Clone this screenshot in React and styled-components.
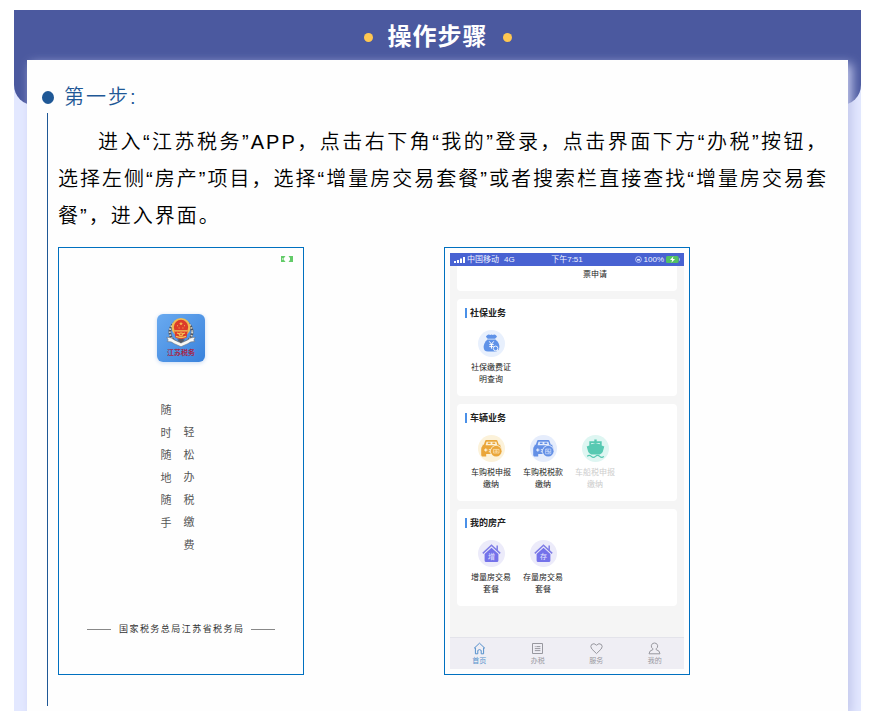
import styled, { createGlobalStyle } from "styled-components"

const carIcon = (color, light, mark) => (
    <svg viewBox="0 0 27 27">
        <path d="M7 6.2Q7.3 5 8.4 5h9.8q1.1 0 1.4 1.2l1.2 3.6h1.5v2H4.6v-2h1.2z" fill={color} />
        <path d="M8.6 6.8h9.8l.9 3.4H7.6z" fill={light} />
        <path d="M9.8 7.6h2.8v1.5H9.8zM14.4 7.6h2.8v1.5h-2.8z" fill={color} />
        <path d="M4.6 11h17.4q1.4 1 1.4 3v5H8.2v2.6H4l-.8-1.4V14q0-2 1.4-3z" fill={color} />
        <path d="M6 14.4h1.1v-1h1.3v1h1.1v1.2H8.4v1H7.1v-1H6zM10.8 14.2h2v1h-2zM10.8 16.2h2v1h-2z" fill={light} />
        <circle cx="18.2" cy="16.2" r="6.1" fill={light} />
        <circle cx="18.2" cy="16.2" r="5.4" fill={color} />
        {mark}
    </svg>
)

const houseIcon = (mark) => (
    <svg viewBox="0 0 27 27">
        <path d="M4.8 13.4L13.5 5.2L22.2 13.4M19.2 10.4V5.6" fill="none" stroke="#7f7de6" strokeWidth="1.5" />
        <path d="M6.6 14l6.9-6.2 6.9 6.2v6.4q0 1.5-1.5 1.5H8.1q-1.5 0-1.5-1.5z" fill="#7472ea" />
        <text x="13.5" y="18.8" textAnchor="middle" fontSize="7" fill="#e6e5ff">{mark}</text>
    </svg>
)

const moneyBag = (
    <svg viewBox="0 0 27 27">
        <path d="M8.8 5.4q2-1.4 3.4-.4 1.3-1 2.6 0 1.8-1 3.4.4l.8 1.3-2 2.1H9.7L7.9 6.7z" fill="#5f92e8" />
        <path d="M9.4 9.4h8q4.2 3.4 4 7.6-.3 4.6-4.6 4.6h-6.8q-4.3 0-4.4-4.6 0-4 3.8-7.6z" fill="#5f92e8" />
        <path d="M11.3 11.4l2.2 2.8 2.2-2.8M13.5 14v4.6M11.3 14.6h4.4M11.3 16.6h4.4" fill="none" stroke="#fff" strokeWidth="1" />
        <circle cx="17.6" cy="18.4" r="2.3" fill="#5f92e8" stroke="#eaf1fd" strokeWidth="1" />
        <path d="M19.2 20.1l2 2" stroke="#eaf1fd" strokeWidth="1.2" />
    </svg>
)

const shipIcon = (
    <svg viewBox="0 0 27 27">
        <path d="M12.3 4.4h2.4v1.8h5v4.4l2.6 1-1.6 5.4q-1.2 1.8-3 2.4H9.3q-1.8-.6-3-2.4l-1.6-5.4 2.6-1V6.2h5z" fill="#57c9b2" />
        <path d="M9.2 8h8.6v1.3l-4.3-1.2-4.3 1.2z" fill="#def6f2" />
        <path d="M5.2 21.4q2-2 4.1 0t4.2 0 4.2 0 4.1 0" fill="none" stroke="#57c9b2" strokeWidth="1.3" />
    </svg>
)

const groups = [
    {
        title: "社保业务",
        items: [{ name: "社保缴费证明查询", tint: "#e8f0fd", icon: moneyBag }]
    },
    {
        title: "车辆业务",
        items: [
            {
                name: "车购税申报缴纳",
                tint: "#fcf2da",
                icon: carIcon("#eaa63a", "#fcf2da", <path d="M15.4 14.4h5.6v3.6h-5.6zM16.4 16.2h3.6M18.2 14.4v3.6" fill="none" stroke="#fbe0ae" strokeWidth=".8" />)
            },
            {
                name: "车购税税款缴纳",
                tint: "#e6edfc",
                icon: carIcon("#6490e6", "#e6edfc", <path d="M15.6 14h5.2v4.8h-5.2zM15.6 16.4h5.2M18.2 14v4.8M16 14.4l4.4 4" fill="none" stroke="#cbdbfa" strokeWidth=".7" />)
            },
            { name: "车船税申报缴纳", tint: "#def6f2", icon: shipIcon, disabled: true }
        ]
    },
    {
        title: "我的房产",
        items: [
            { name: "增量房交易套餐", tint: "#ecebfa", icon: houseIcon("增") },
            { name: "存量房交易套餐", tint: "#ecebfa", icon: houseIcon("存") }
        ]
    }
]

const tabs = [
    { name: "首页", active: true, icon: <path d="M1 6.4L6.5 1.2 12 6.4M2.4 5.6v6.2h2.4V8.4q1.7-1.6 3.4 0v3.4h2.4V5.6" /> },
    { name: "办税", icon: <path d="M1.5 1.5h10v10h-10zM3.8 4.6h.8M5.4 4.6h4M3.8 6.6h5.6M3.8 8.6h5.6" /> },
    { name: "服务", icon: <path d="M6.5 11.6L1.8 7Q-.1 4.4 1.6 2.5 4 .5 6.5 3.2 9 .5 11.4 2.5 13.1 4.4 11.2 7z" /> },
    { name: "我的", icon: <path d="M6.5 1a3.1 3.1 0 0 1 1.6 5.8v.8q3.7.9 3.9 4.2H1q.2-3.3 3.9-4.2v-.8A3.1 3.1 0 0 1 6.5 1z" /> }
]

export default function App() {
    return (
        <>
            <GlobalStyle />
            <Page>
                <Banner>
                    <Dot />
                    <h1>操作步骤</h1>
                    <Dot />
                </Banner>
                <Sheet>
                    <StepTitle>第一步:</StepTitle>
                    <StepBody>
                        <p>
                            进入“江苏税务”APP，点击右下角“我的”登录，点击界面下方“办税”按钮，选择左侧“房产”项目，选择“增量房交易套餐”或者搜索栏直接查找“增量房交易套餐”，进入界面。
                        </p>
                        <Shots>
                            <Frame><SplashScreen /></Frame>
                            <Frame><HomeScreen /></Frame>
                        </Shots>
                    </StepBody>
                </Sheet>
            </Page>
        </>
    )
}

function SplashScreen() {
    return (
        <Splash>
            <Battery viewBox="0 0 12 6">
                <path d="M0 0h4.5L3 2v2l1.5 2H0zM12 0H7.5L9 2v2L7.5 6H12z" fill="#63cb69" />
                <path d="M1 2h1.6v2H1z" fill="#b9ebb9" />
            </Battery>
            <AppLogo>
                <Emblem />
                <span>江苏税务</span>
            </AppLogo>
            <Slogan>
                <SloganColumn>
                    {[..."随时随地随手"].map((char, index) => <span key={index}>{char}</span>)}
                </SloganColumn>
                <SloganColumn $lower>
                    {[..."轻松办税缴费"].map((char, index) => <span key={index}>{char}</span>)}
                </SloganColumn>
            </Slogan>
            <Owner><span>国家税务总局江苏省税务局</span></Owner>
        </Splash>
    )
}

function Emblem() {
    return (
        <svg viewBox="0 0 30 30">
            <circle cx="15" cy="15" r="11.2" fill="none" stroke="#4d5563" strokeWidth="2.6" />
            <circle cx="15" cy="15" r="11.2" fill="none" stroke="#d8d8d2" strokeWidth="2" strokeDasharray="1.4 1.7" />
            <path d="M.8 20.4q4.6-.6 7.6 2.6l6.6 3 6.6-3q3-3.2 7.6-2.6l-1.4 2.6 1 1.6q-4.4-.4-7 2.1l-6.8 3-6.8-3q-2.6-2.5-7-2.1l1-1.6z" fill="#f8f8f5" stroke="#69707c" strokeWidth=".6" />
            <path d="M15 21.4l4 1.4-4 3.2-4-3.2z" fill="#555a66" />
            <circle cx="15" cy="10.4" r="9.4" fill="#eebc55" />
            <circle cx="15" cy="10" r="7.2" fill="#dc3b2a" />
            <path d="M8.4 14.2h13.2l-1 6.2q-5.6 3-11.2 0z" fill="#dc3b2a" />
            <path d="M9 13.8h12M11 16l3 1.2M19 16l-3 1.2M10 19.4q5 2.2 10 0" fill="none" stroke="#f2c75a" strokeWidth="1.3" />
            <circle cx="15" cy="17.4" r="2.1" fill="#efbd50" />
            <circle cx="15" cy="17.4" r=".8" fill="#dc3b2a" />
            <path d="M15 4.8l.6 1.2 1.3.1-1 .9.3 1.3-1.2-.7-1.2.7.3-1.3-1-.9 1.3-.1zM11 8.2h1v1h-1zM18 8.2h1v1h-1zM12.6 10.4h1v1h-1zM16.4 10.4h1v1h-1z" fill="#f4b84c" />
        </svg>
    )
}

function HomeScreen() {
    return (
        <Home>
            <StatusBar>
                <div>
                    <svg width="11" height="8" viewBox="0 0 11 8">
                        <path d="M0 5h2v2H0zM3 4h2v3H3zM6 2.5h2V7H6zM9 1h2v6H9z" fill="#fff" />
                    </svg>
                    <span>中国移动</span>
                    <span>4G</span>
                </div>
                <time>下午7:51</time>
                <div>
                    <svg width="7" height="7" viewBox="0 0 7 7">
                        <circle cx="3.5" cy="3.5" r="2.9" fill="none" stroke="#d4dcff" strokeWidth=".8" />
                        <path d="M2 3h3v1.6H2z" fill="#e4e9ff" />
                    </svg>
                    <span>100%</span>
                    <svg width="14" height="7" viewBox="0 0 14 7">
                        <rect width="12.6" height="7" rx="1.6" fill="#52c163" />
                        <path d="M13.2 2.3h.8v2.4h-.8z" fill="#b6c3ff" />
                        <path d="M7.4.2L4 4h2.2l-.8 2.8L9 3H6.8z" fill="#fff" />
                    </svg>
                </div>
            </StatusBar>
            <Services>
                <CutCard>
                    <span>票申请</span>
                </CutCard>
                {groups.map((group) => (
                    <Card key={group.title}>
                        <h3>{group.title}</h3>
                        <Tiles>
                            {group.items.map((item) => (
                                <Tile key={item.name} disabled={item.disabled} $tint={item.tint}>
                                    {item.icon}
                                    <span>{item.name}</span>
                                </Tile>
                            ))}
                        </Tiles>
                    </Card>
                ))}
            </Services>
            <TabBar>
                {tabs.map((tab) => (
                    <Tab key={tab.name} href="#" $active={tab.active}>
                        <svg viewBox="0 0 13 13" fill="none" stroke="currentColor" strokeWidth="1">{tab.icon}</svg>
                        {tab.name}
                    </Tab>
                ))}
            </TabBar>
        </Home>
    )
}

const GlobalStyle = createGlobalStyle`
    * {
        box-sizing: border-box;
    }
    body {
        margin: 0;
        background-color: #fff;
        font-family: "Liberation Sans", "Noto Sans CJK SC", sans-serif;
    }
    h1, h2, h3, p {
        margin: 0;
    }
    button {
        font-family: inherit;
        padding: 0;
        border: none;
        background: none;
    }
`
const Page = styled.main`
    margin: 10px 8px 0 14px;
    background-color: #e3e8ff;
`
const Banner = styled.header`
    display: flex;
    justify-content: center;
    gap: 15px;
    height: 95px;
    padding-top: 9px;
    border-radius: 0 0 20px 20px;
    background-color: #4b599f;
    h1 {
        color: #fff;
        font-size: 24px;
        line-height: 36px;
        letter-spacing: 1px;
    }
`
const Dot = styled.i`
    width: 9px;
    height: 9px;
    margin-top: 14px;
    border-radius: 50%;
    background-color: #ffc751;
`
const Sheet = styled.section`
    position: relative;
    margin: -45px 13px 0;
    padding: 21px 20px 5px;
    background-color: #fefefe;
    box-shadow: 4px 4px 10px #c3c8ec;
`
const StepTitle = styled.h2`
    display: flex;
    align-items: center;
    gap: 10px;
    margin-left: -5px;
    color: #1f5896;
    font-size: 20px;
    font-weight: 350;
    line-height: 32px;
    letter-spacing: 2px;
    &::before {
        content: "";
        width: 12px;
        height: 13px;
        border-radius: 50%;
        background-color: #1f5896;
    }
`
const StepBody = styled.div`
    padding: 11px 0 31px 10px;
    border-left: 1px solid #1f5896;
    > p {
        color: #000;
        font-size: 20px;
        font-weight: 350;
        line-height: 37px;
        letter-spacing: 2px;
        text-align: justify;
        text-indent: 40px;
    }
`
const Shots = styled.div`
    display: grid;
    grid-template-columns: 1fr 1fr;
    gap: 2px;
    margin-top: 12px;
`
const Frame = styled.figure`
    width: 246px;
    margin: 0;
    padding: 5px;
    border: 1px solid #0070c0;
`
const Splash = styled.div`
    display: flex;
    flex-direction: column;
    align-items: center;
    height: 416px;
    padding: 3px 23px 34px;
    color: #555;
`
const Battery = styled.svg`
    width: 12px;
    height: 6px;
    align-self: flex-end;
    margin-right: -18px;
`
const AppLogo = styled.div`
    display: flex;
    flex-direction: column;
    align-items: center;
    width: 48px;
    height: 48px;
    margin-top: 52px;
    padding-top: 3px;
    border-radius: 6px;
    background-image: linear-gradient(135deg, #69aaf0, #3982dc);
    box-shadow: 0 1px 4px #c9daf3;
    svg {
        width: 30px;
        height: 30px;
    }
    span {
        color: #a5284a;
        font-size: 7px;
        font-weight: 700;
        line-height: 12px;
    }
`
const Slogan = styled.div`
    display: flex;
    gap: 12px;
    margin: 37px 0 auto;
    padding-right: 7px;
`
const SloganColumn = styled.div`
    display: flex;
    flex-direction: column;
    justify-content: space-between;
    height: 135px;
    margin-top: ${props => props.$lower ? "22px" : "0"};
    font-size: 11px;
    line-height: 22px;
`
const Owner = styled.div`
    display: flex;
    align-items: center;
    gap: 8px;
    width: 100%;
    color: #333;
    font-size: 9px;
    line-height: 12px;
    span {
        flex: 1;
        text-align-last: justify;
    }
    &::before, &::after {
        content: "";
        width: 24px;
        height: 1px;
        background-color: #888;
    }
`
const Home = styled.div`
    display: flex;
    flex-direction: column;
    height: 416px;
    background-color: #f5f5f5;
`
const StatusBar = styled.div`
    display: grid;
    grid-template-columns: 1fr auto 1fr;
    align-items: center;
    height: 13px;
    padding: 0 4px;
    background-color: #4862d2;
    color: #f1f4ff;
    font-size: 8px;
    line-height: 13px;
    div {
        display: flex;
        align-items: center;
        gap: 2px;
    }
    div:last-child {
        justify-content: flex-end;
    }
    span + span {
        margin-left: 3px;
    }
`
const Services = styled.div`
    display: flex;
    flex-direction: column;
    flex: 1;
    gap: 8px;
    padding: 0 7px;
`
const CutCard = styled.div`
    height: 25px;
    padding: 3px 0 0 126px;
    border-radius: 0 0 4px 4px;
    background-color: #fff;
    color: #222;
    font-size: 8px;
    line-height: 12px;
`
const Card = styled.section`
    height: 97px;
    padding: 8px;
    border-radius: 4px;
    background-color: #fff;
    h3 {
        display: flex;
        align-items: center;
        gap: 3px;
        color: #222;
        font-size: 9px;
        line-height: 12px;
    }
    h3::before {
        content: "";
        width: 2px;
        height: 10px;
        background-color: #4a90e8;
    }
`
const Tiles = styled.div`
    display: flex;
    margin-top: 11px;
`
const Tile = styled.button`
    display: flex;
    flex-direction: column;
    align-items: center;
    gap: 5px;
    width: 52px;
    color: #222;
    font-size: 8px;
    line-height: 12px;
    &:disabled {
        color: #ccc;
    }
    svg {
        width: 27px;
        height: 27px;
        border-radius: 50%;
        background-color: ${props => props.$tint};
    }
    span {
        width: 42px;
    }
`
const TabBar = styled.nav`
    display: grid;
    grid-template-columns: repeat(4, 1fr);
    height: 32px;
    border-top: 1px solid #e3e3ea;
    background-color: #efeef4;
`
const Tab = styled.a`
    display: flex;
    flex-direction: column;
    align-items: center;
    padding-top: 4px;
    color: ${props => props.$active ? "#5590cc" : "#98989f"};
    font-size: 7px;
    line-height: 11px;
    text-decoration: none;
    svg {
        width: 13px;
        height: 13px;
    }
`
